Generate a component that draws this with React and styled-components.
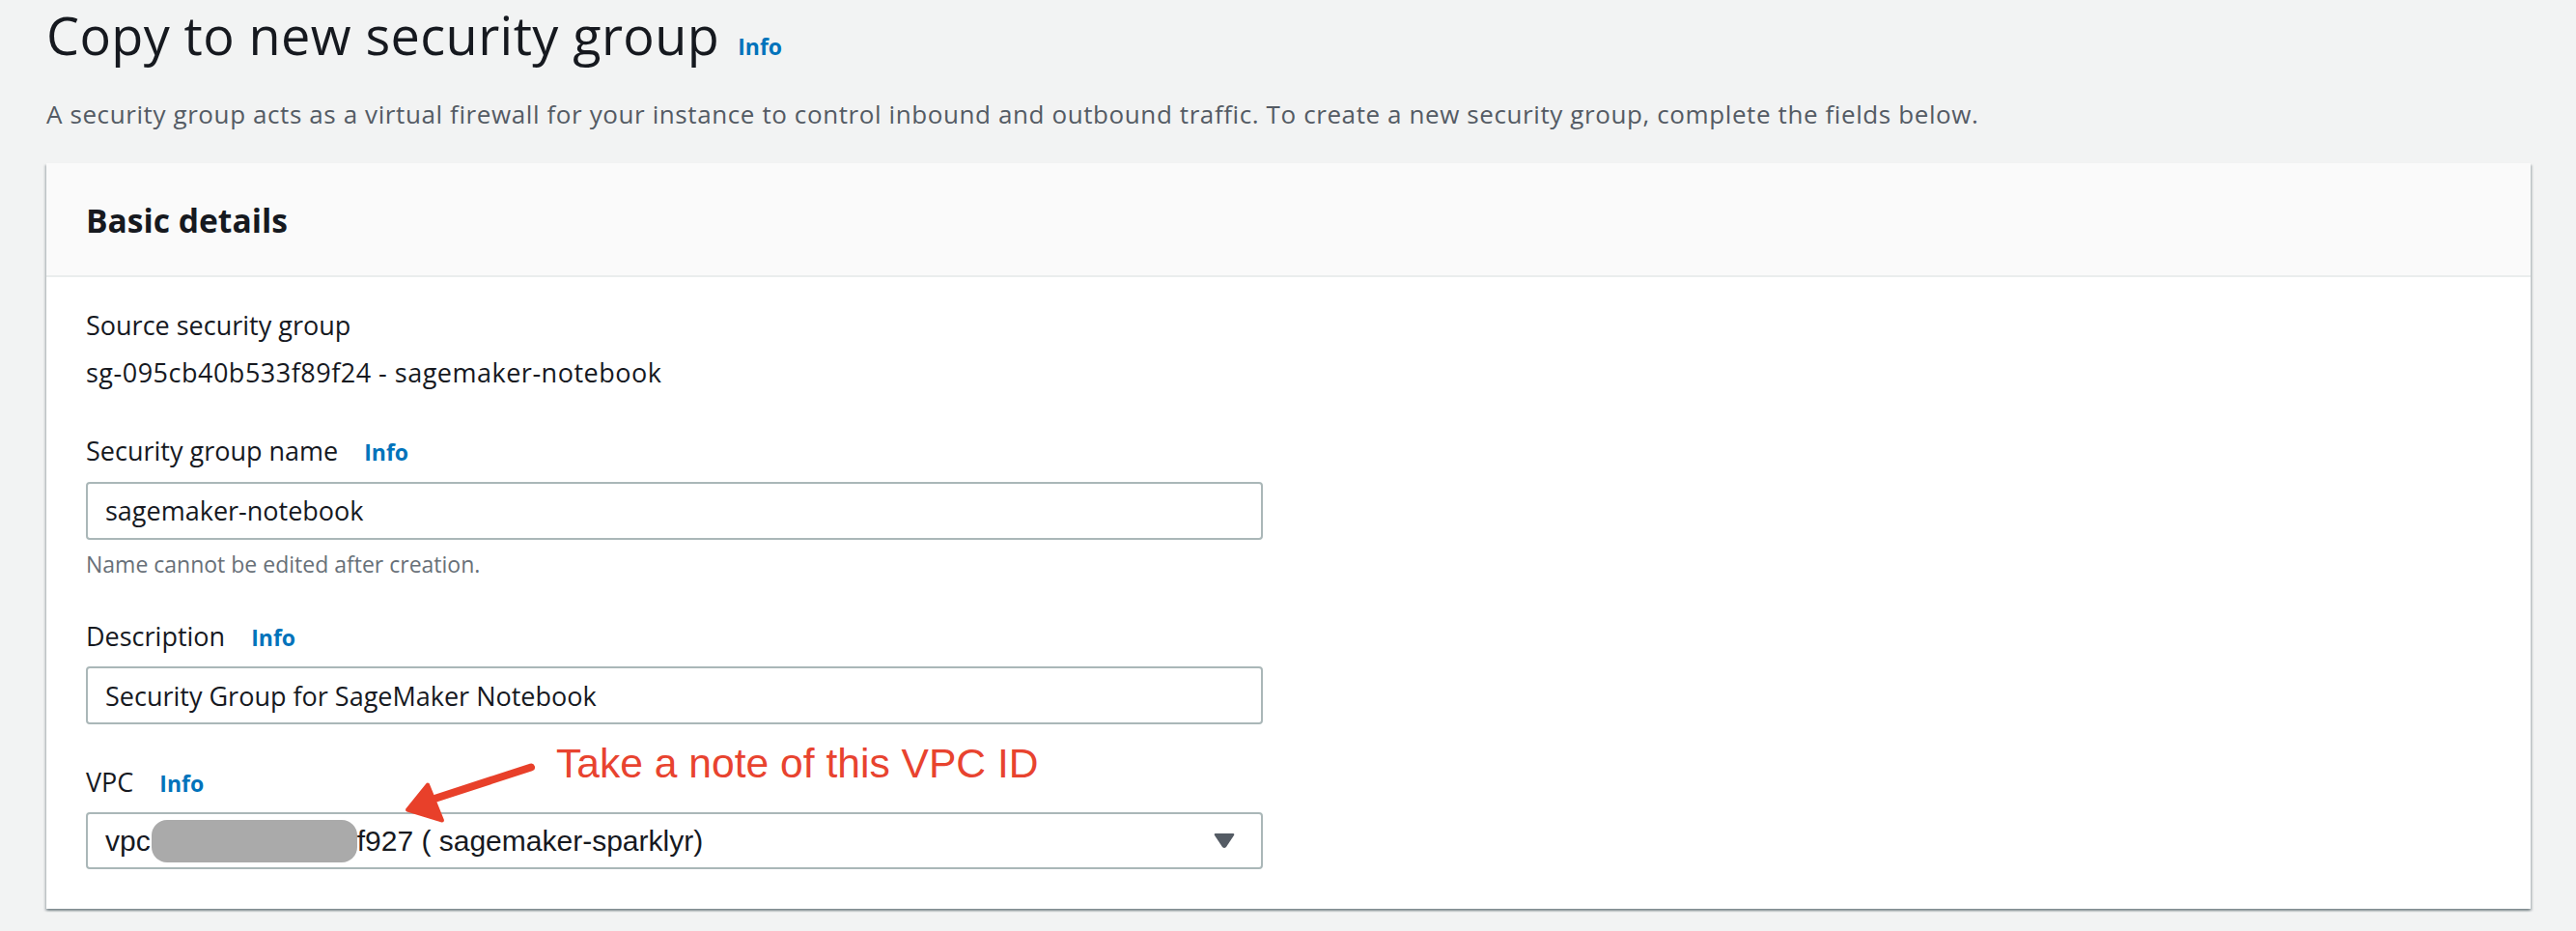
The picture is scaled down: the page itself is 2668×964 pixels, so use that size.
import React from 'react';
import styled, {createGlobalStyle} from 'styled-components';

const GlobalStyle = createGlobalStyle`
    body {
        margin: 0;
        background: #f2f3f3;
        font-family: "Open Sans", "Noto Sans", sans-serif;
        color: #16191f;
    }
`;

const Page = styled.div`
    padding: 0 47px 26px 48px;
`;

const TitleRow = styled.div`
    display: flex;
    align-items: baseline;
    gap: 19px;
`;

const Title = styled.h1`
    margin: 0;
    font-size: 54px;
    line-height: 72px;
    font-weight: 400;
    letter-spacing: 0.4px;
    color: #16191f;
`;

const Info = styled.a`
    font-size: 23px;
    font-weight: 700;
    color: #0073bb;
    text-decoration: none;
    margin-left: ${props => props.gap || 0}px;
`;

const Lead = styled.p`
    margin: 28px 0 33px;
    font-size: 26px;
    line-height: 36px;
    letter-spacing: 0.6px;
    color: #545b64;
`;

const Card = styled.div`
    background: #fff;
    box-shadow: 0 2px 2px 0 rgba(0, 28, 36, 0.3), 2px 2px 2px 0 rgba(0, 28, 36, 0.15), -2px 2px 2px 0 rgba(0, 28, 36, 0.15);
`;

const CardHeader = styled.div`
    background: #fafafa;
    border-bottom: 2px solid #eaeded;
    padding: 35px 41px 33px;
`;

const CardTitle = styled.h2`
    margin: 0;
    font-size: 33.6px;
    line-height: 48px;
    font-weight: 700;
`;

const CardBody = styled.div`
    padding: 30px 41px 41px;
`;

const Field = styled.div`
    position: relative;
    margin-top: ${props => props.top || 0}px;
`;

const Label = styled.div`
    display: flex;
    align-items: baseline;
    font-size: 27px;
    line-height: 40px;
`;

const Value = styled.div`
    margin-top: 9px;
    font-size: 27px;
    line-height: 40px;
    letter-spacing: 0.5px;
`;

const Input = styled.div`
    box-sizing: border-box;
    width: 1219px;
    height: ${props => props.h || 60}px;
    margin-top: 10.5px;
    border: 2px solid #aab7b8;
    border-radius: 4px;
    padding: 0 27px 0 18px;
    display: flex;
    align-items: center;
    justify-content: space-between;
    font-size: 27px;
    background: #fff;
`;

const Hint = styled.div`
    margin-top: 8px;
    font-size: 23px;
    line-height: 34px;
    color: #687078;
`;

const SelectText = styled.span`
    font-family: "Liberation Sans", Arial, sans-serif;
    font-size: 30px;
    color: #16191f;
    display: flex;
    align-items: center;
`;

const Redacted = styled.span`
    display: inline-block;
    width: 213px;
    height: 44px;
    margin-left: 1px;
    border-radius: 16px;
    background: #aaaaaa;
`;

const Note = styled.div`
    position: absolute;
    left: 487px;
    top: -24px;
    font-family: "Liberation Sans", Arial, sans-serif;
    font-size: 42.6px;
    line-height: 48px;
    color: #e8432f;
    white-space: nowrap;
`;

const Arrow = styled.svg`
    position: absolute;
    left: 326px;
    top: -3px;
    overflow: visible;
`;

const Caret = () => (
    <svg width="22" height="17" viewBox="0 0 22 17">
        <path d="M2 1h18q2 0 1 2l-8 12q-2 2-4 0L1 3q-1-2 1-2z" fill="#545b64" />
    </svg>
);

const App = () => {
    return (
        <Page>
            <GlobalStyle />
            <TitleRow>
                <Title>Copy to new security group</Title>
                <Info>Info</Info>
            </TitleRow>
            <Lead>
                A security group acts as a virtual firewall for your instance to control inbound and outbound traffic. To create a new security group, complete the fields below.
            </Lead>
            <Card>
                <CardHeader>
                    <CardTitle>Basic details</CardTitle>
                </CardHeader>
                <CardBody>
                    <Field>
                        <Label>Source security group</Label>
                        <Value>sg-095cb40b533f89f24 - sagemaker-notebook</Value>
                    </Field>
                    <Field top={41}>
                        <Label>Security group name <Info gap={27}>Info</Info></Label>
                        <Input>sagemaker-notebook</Input>
                        <Hint>Name cannot be edited after creation.</Hint>
                    </Field>
                    <Field top={38}>
                        <Label>Description <Info gap={27}>Info</Info></Label>
                        <Input>Security Group for SageMaker Notebook</Input>
                    </Field>
                    <Field top={39.5}>
                        <Label>VPC <Info gap={27}>Info</Info></Label>
                        <Input h={59}>
                            <SelectText>vpc<Redacted />f927 ( sagemaker-sparklyr)</SelectText>
                            <Caret />
                        </Input>
                        <Note>Take a note of this VPC ID</Note>
                        <Arrow width="140" height="70" viewBox="0 0 140 70">
                            <path d="M135 7.5 Q 90 22 32 41" stroke="#e8402a" strokeWidth="8" strokeLinecap="round" fill="none" />
                            <path d="M7 51.5 L28 25.5 L43 62.5 Z" fill="#e8402a" stroke="#e8402a" strokeWidth="4" strokeLinejoin="round" />
                        </Arrow>
                    </Field>
                </CardBody>
            </Card>
        </Page>
    );
};

export default App;
